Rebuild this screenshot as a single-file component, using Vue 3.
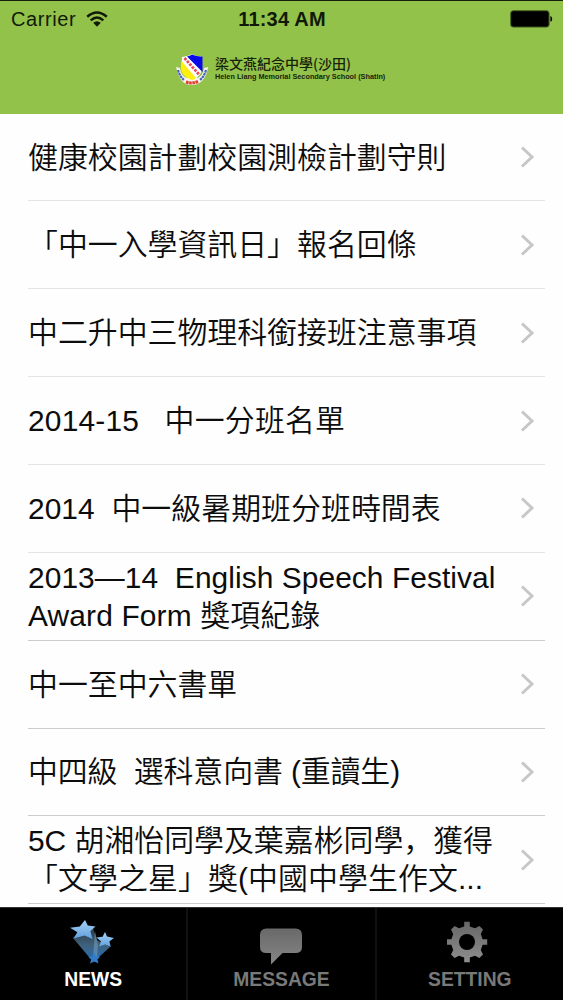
<script setup>
import { ref } from 'vue'

// spacing is the tracking of the line, in px
const newsList = ref([
    { id: 1, lines: [{ text: "健康校園計劃校園測檢計劃守則", spacing: 0 }] },
    { id: 2, lines: [{ text: "「中一入學資訊日」報名回條", spacing: 0 }] },
    { id: 3, lines: [{ text: "中二升中三物理科銜接班注意事項", spacing: 0 }] },
    { id: 4, lines: [{ text: "2014-15   中一分班名單", spacing: 0.2 }] },
    { id: 5, lines: [{ text: "2014  中一級暑期班分班時間表", spacing: 0.05 }] },
    { id: 6, lines: [{ text: "2013—14  English Speech Festival", spacing: 0.07 }, { text: "Award Form 獎項紀錄", spacing: 0.15 }] },
    { id: 7, lines: [{ text: "中一至中六書單", spacing: 0 }] },
    { id: 8, lines: [{ text: "中四級  選科意向書 (重讀生)", spacing: -0.1 }] },
    { id: 9, lines: [{ text: "5C 胡湘怡同學及葉嘉彬同學，獲得", spacing: 0 }, { text: "「文學之星」獎(中國中學生作文...", spacing: 0.1 }] },
])

const tabs = ref(["NEWS", "MESSAGE", "SETTING"])
const activeTab = ref("NEWS")

const changeTab = (name) => {
    activeTab.value = name
}
</script>

<template>
    <div class="page">
        <header class="header">
            <div class="status">
                <div class="carrier">
                    <span>Carrier</span>
                    <svg class="wifi" width="22" height="17" viewBox="0 0 22 17">
                        <path d="M1.2 5.8 Q11 -2.8 20.8 5.8" fill="none" stroke="#111a08" stroke-width="2.5" />
                        <path d="M4.7 9.4 Q11 3.6 17.3 9.4" fill="none" stroke="#111a08" stroke-width="2.4" />
                        <path d="M7.2 11.8 Q11 8.6 14.8 11.8 L11 15.8 Z" fill="#111a08" />
                    </svg>
                </div>
                <div class="clock">11:34 AM</div>
                <svg class="battery" width="44" height="18" viewBox="0 0 44 18">
                    <rect x="1.7" y="0.7" width="38.4" height="16.4" rx="2.5" fill="#000" stroke="#4d6626" stroke-width="1" />
                    <path d="M41.4 6 Q43.2 6.6 43.2 8.9 Q43.2 11.2 41.4 11.8 Z" fill="#000" />
                </svg>
            </div>
            <div class="brand">
                <svg class="crest" width="34" height="34" viewBox="0 0 34 34">
                    <path d="M1 14 L5 15 Q6 23 12 25 L22 25 Q28 23 29 15 L33 14 Q32 23 27 28 Q22 32.5 16 32 Q5 32 1 14 Z" fill="#f5f3ef" />
                    <path d="M3 17 Q5 24 9 27" fill="none" stroke="#4a63b5" stroke-width="2.2" stroke-dasharray="2.5 0.6" />
                    <path d="M31 17 Q29 24 25 27" fill="none" stroke="#4a63b5" stroke-width="2.2" stroke-dasharray="2.5 0.6" />
                    <path d="M11 29 Q17 31 23 28.5" fill="none" stroke="#e23c2c" stroke-width="3" stroke-dasharray="2.6 0.6" />
                    <path d="M7 4 Q12 4 17 1 Q22 4 27 3.5 L27 16 Q26 23 18 27 Q8 24 6.5 15 Z" fill="#fff" />
                    <path d="M6.5 8 L21 25 Q19 27 17 27 Q6 24 5.8 14 Z" fill="#ffef10" />
                    <path d="M12 3.5 Q15 3 17 1.5 Q22 4 27.5 3.5 L27.5 19 Z" fill="#0808e8" />
                    <path d="M9.5 5 L24 21.5" fill="none" stroke="#fff" stroke-width="5" />
                    <path d="M9.5 5 L24 21.5" fill="none" stroke="#e8485a" stroke-width="2.8" stroke-dasharray="2.6 1.2" />
                </svg>
                <div class="school">
                    <div class="school-zh">梁文燕紀念中學(沙田)</div>
                    <div class="school-en">Helen Liang Memorial Secondary School (Shatin)</div>
                </div>
            </div>
        </header>

        <main class="list">
            <div v-for="item in newsList" :key="item.id" class="row" :class="{ dark: item.id > 5 }">
                <div class="title">
                    <div v-for="line in item.lines" :key="line.text" class="line" :style="{ letterSpacing: line.spacing + 'px' }">{{ line.text }}</div>
                </div>
                <svg class="arrow" width="15" height="22" viewBox="0 0 15 22">
                    <path d="M2 1.5 L12 11 L2 20.5" fill="none" stroke="#c7c7c9" stroke-width="3" />
                </svg>
            </div>
        </main>

        <nav class="tabbar">
            <div v-for="name in tabs" :key="name" class="tab" :class="{ active: activeTab === name }" @click="changeTab(name)">
                <svg v-if="name === 'NEWS'" class="icon" width="46" height="46" viewBox="1 0 46 46">
                    <defs>
                        <linearGradient id="trail" x1="0" y1="0" x2="0" y2="1">
                            <stop offset="0" stop-color="#2c3a44" />
                            <stop offset="0.5" stop-color="#3f617c" />
                            <stop offset="1" stop-color="#2470bd" />
                        </linearGradient>
                        <linearGradient id="star" x1="0" y1="0" x2="0" y2="1">
                            <stop offset="0" stop-color="#a6d2f6" />
                            <stop offset="1" stop-color="#5f9fdd" />
                        </linearGradient>
                    </defs>
                    <path d="M4 19 L24 9 L28 21 L41 28 L30 38 L26 43 L20 38 Z" fill="url(#trail)" />
                    <path d="M26 12 L29 26 L28 40 L24 40 Z" fill="#7199b5" opacity="0.6" />
                    <path d="M25 34 L27 37.5 L31 38 L28.4 40.5 L29.4 44.5 L25.4 42.6 L21 44.5 L22.2 40.6 L19.4 38 L23.4 37.5 Z" fill="#2f7dcc" />
                    <path d="M16 1 L18.8 6.6 L26.5 7.4 L21.4 12.2 L23.5 20 L15.6 16.6 L4.4 19.6 L8.4 13.2 L1 8.8 L10.8 7.4 Z" fill="url(#star)" />
                    <path d="M36 13 L38 17.6 L45 19 L40.4 22.4 L41.8 28 L36 25.4 L30 27.6 L32 22.4 L27.4 18.4 L33.6 17.8 Z" fill="url(#star)" />
                </svg>
                <svg v-else-if="name === 'MESSAGE'" class="icon" width="46" height="46" viewBox="0 0 46 46">
                    <defs>
                        <linearGradient id="bubble" x1="0" y1="0" x2="0" y2="1">
                            <stop offset="0" stop-color="#696969" />
                            <stop offset="1" stop-color="#868686" />
                        </linearGradient>
                    </defs>
                    <path d="M8.5 9.5 H37.5 Q44 9.5 44 16 V28 Q44 34 37.5 34 H24.5 L13 45.5 V34 H8.5 Q2 34 2 28 V16 Q2 9.5 8.5 9.5 Z" fill="url(#bubble)" />
                </svg>
                <svg v-else class="icon" width="46" height="46" viewBox="3 0 46 46">
                    <defs>
                        <linearGradient id="gear" x1="0" y1="0" x2="0" y2="1">
                            <stop offset="0" stop-color="#666" />
                            <stop offset="1" stop-color="#8e8e8e" />
                        </linearGradient>
                        <mask id="hole">
                            <rect width="46" height="46" fill="#fff" />
                            <circle cx="23" cy="23" r="8" fill="#000" />
                        </mask>
                    </defs>
                    <path mask="url(#hole)" fill="url(#gear)" d="M20.2 2.8 H25.8 V7.4 L31 9.2 L35.4 7 L39 10.6 L36.8 15 L38.6 20.2 H43.2 V25.8 H38.6 L36.8 31 L39 35.4 L35.4 39 L31 36.8 L25.8 38.6 V43.2 H20.2 V38.6 L15 36.8 L10.6 39 L7 35.4 L9.2 31 L7.4 25.8 H2.8 V20.2 H7.4 L9.2 15 L7 10.6 L10.6 7 L15 9.2 L20.2 7.4 Z" />
                </svg>
                <span class="label">{{ name }}</span>
            </div>
        </nav>
    </div>
</template>

<style>
body {
    margin: 0;
    background: #fefefe;
}
</style>

<style scoped>
.page {
    display: flex;
    flex-direction: column;
    width: 563px;
    height: 1000px;
    overflow: hidden;
    background: #fefefe;
}

.header {
    box-sizing: border-box;
    height: 113.6px;
    flex: none;
    border-top: 1px solid #17200b;
    background: #92c24a;
    font-family: "Liberation Sans", "Noto Sans CJK TC", sans-serif;
}

.status {
    display: grid;
    grid-template-columns: 1fr auto 1fr;
    align-items: center;
    height: 36px;
    padding: 0 10px 0 11px;
    color: #111a08;
    font-size: 20px;
}

.carrier {
    display: flex;
    align-items: center;
    gap: 10px;
    letter-spacing: 0.6px;
}

.clock {
    font-weight: bold;
    letter-spacing: 0.2px;
}

.battery {
    justify-self: end;
}

.brand {
    display: flex;
    gap: 6px;
    padding: 16px 0 0 175px;
}

.school {
    padding-top: 2px;
    color: #17240b;
    white-space: nowrap;
}

.school-zh {
    font-family: "Noto Sans CJK TC", sans-serif;
    font-weight: 500;
    font-size: 14px;
    line-height: 16px;
}

.school-en {
    font-weight: bold;
    font-size: 7.3px;
    line-height: 11px;
}

.list {
    height: 793.9px;
    flex: none;
    overflow: hidden;
}

.row {
    box-sizing: border-box;
    display: flex;
    align-items: center;
    justify-content: space-between;
    height: 87.85px;
    margin: 0 18px 0 28px;
    padding-right: 10px;
    border-bottom: 1px solid #e4e4e4;
}

.row.dark {
    border-color: #cbcbcb;
}

.title {
    padding-top: 1px;
    color: #0c0c0c;
    font-family: "Liberation Sans", "Noto Sans CJK SC DemiLight", "Noto Sans CJK SC", sans-serif;
    font-size: 29.9px;
    font-weight: 350;
}

.line {
    line-height: 38px;
    white-space: pre;
}

.arrow {
    flex: none;
}

.tabbar {
    box-sizing: border-box;
    display: flex;
    flex: 1;
    background: #000;
    border-top: 1px solid #333;
    font-family: "Liberation Sans", sans-serif;
}

.tab {
    box-sizing: border-box;
    display: flex;
    flex: 1;
    flex-direction: column;
    align-items: center;
    padding-top: 11px;
    color: #797979;
    cursor: pointer;
}

.tab + .tab {
    border-left: 2px solid #111;
}

.tab.active {
    color: #fff;
}

.label {
    margin-top: 3px;
    font-size: 19.3px;
    font-weight: bold;
    line-height: 24px;
}
</style>
